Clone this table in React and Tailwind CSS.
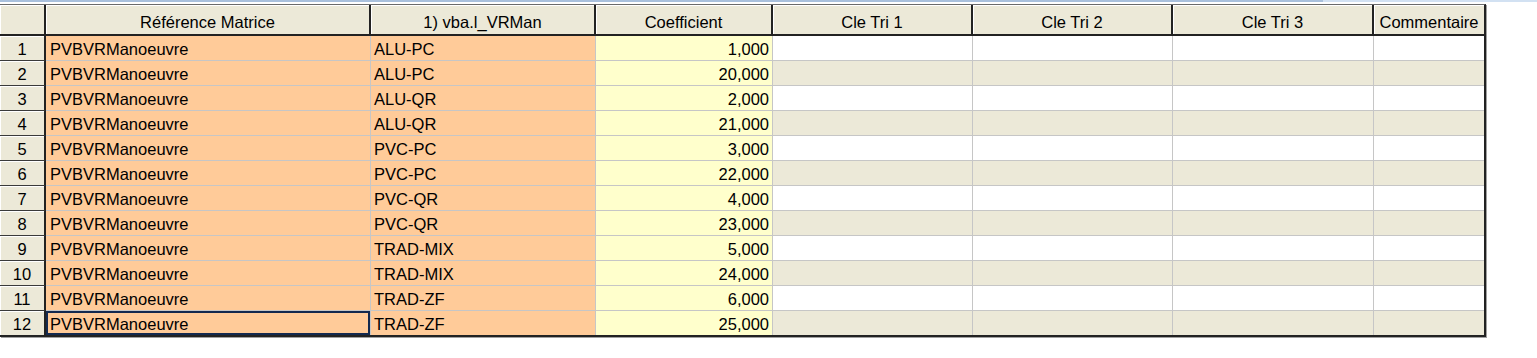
import React from "react";

const rows = [
  ["ALU-PC", "1,000"],
  ["ALU-PC", "20,000"],
  ["ALU-QR", "2,000"],
  ["ALU-QR", "21,000"],
  ["PVC-PC", "3,000"],
  ["PVC-PC", "22,000"],
  ["PVC-QR", "4,000"],
  ["PVC-QR", "23,000"],
  ["TRAD-MIX", "5,000"],
  ["TRAD-MIX", "24,000"],
  ["TRAD-ZF", "6,000"],
  ["TRAD-ZF", "25,000"],
];

const headers = [
  { label: "Référence Matrice", w: "w-[325px]" },
  { label: "1) vba.l_VRMan", w: "w-[225px]" },
  { label: "Coefficient", w: "w-[177px]" },
  { label: "Cle Tri 1", w: "w-[200px]" },
  { label: "Cle Tri 2", w: "w-[200px]" },
  { label: "Cle Tri 3", w: "w-[201px]" },
  { label: "Commentaire", w: "w-[110px]" },
];

export default function App() {
  return (
    <div className="w-[1537px] h-[358px] bg-white overflow-hidden text-black text-[16.5px] font-['Liberation_Sans',Arial,sans-serif]">
      <div className="flex h-[2px]">
        <div className="w-[1323px] bg-[#a9c0dc]" />
        <div className="flex-1 bg-[#d2e1f2]" />
      </div>
      <div className="h-[2px]" />
      <div className="w-[1486px] border-t border-t-[#6a6a6a] border-r-2 border-r-[#222] border-b-2 border-b-[#222] shadow-[1px_1px_0_#a0a0a0]">
        {/* header */}
        <div className="flex h-[31px] border-b-2 border-b-[#222] bg-[#ece9d8]">
          <div className="w-[46px] shrink-0 border-r-2 border-r-[#222] shadow-[inset_1px_1px_0_#fff]" />
          {headers.map((h, i) => (
            <div
              key={h.label}
              className={`${h.w} shrink-0 text-center leading-[34px] overflow-hidden whitespace-nowrap shadow-[inset_1px_1px_0_#fff] ${
                i < headers.length - 1 ? "border-r-2 border-r-[#222]" : ""
              }`}
            >
              {h.label}
            </div>
          ))}
        </div>
        {/* body */}
        {rows.map((r, i) => {
          const last = i === rows.length - 1;
          const alt = i % 2 === 1 ? "bg-[#ece9d8]" : "bg-white";
          const gb = last ? "h-[24px]" : "h-[25px] border-b border-b-[#c6c6c6]";
          return (
            <div key={i} className="flex">
              <div
                className={`w-[46px] shrink-0 bg-[#ece9d8] border-r-2 border-r-[#222] text-center leading-[26px] shadow-[inset_1px_1px_0_#fff] ${
                  last ? "h-[24px]" : "h-[25px] border-b border-b-[#3a3a3a]"
                }`}
              >
                {i + 1}
              </div>
              <div
                className={`w-[325px] shrink-0 bg-[#ffcb99] border-r border-r-[#c6c6c6] pl-[4px] leading-[26px] whitespace-nowrap overflow-hidden ${gb} ${
                  last ? "shadow-[inset_0_0_0_2px_#13294f]" : ""
                }`}
              >
                PVBVRManoeuvre
              </div>
              <div className={`w-[225px] shrink-0 bg-[#ffcb99] border-r border-r-[#c6c6c6] pl-[3px] leading-[26px] whitespace-nowrap overflow-hidden ${gb}`}>
                {r[0]}
              </div>
              <div className={`w-[177px] shrink-0 bg-[#ffffcc] border-r border-r-[#c6c6c6] pr-[3px] text-right leading-[26px] whitespace-nowrap overflow-hidden ${gb}`}>
                {r[1]}
              </div>
              <div className={`w-[200px] shrink-0 ${alt} border-r border-r-[#c6c6c6] ${gb}`} />
              <div className={`w-[200px] shrink-0 ${alt} border-r border-r-[#c6c6c6] ${gb}`} />
              <div className={`w-[201px] shrink-0 ${alt} border-r border-r-[#c6c6c6] ${gb}`} />
              <div className={`w-[110px] shrink-0 ${alt} ${gb}`} />
            </div>
          );
        })}
      </div>
    </div>
  );
}
